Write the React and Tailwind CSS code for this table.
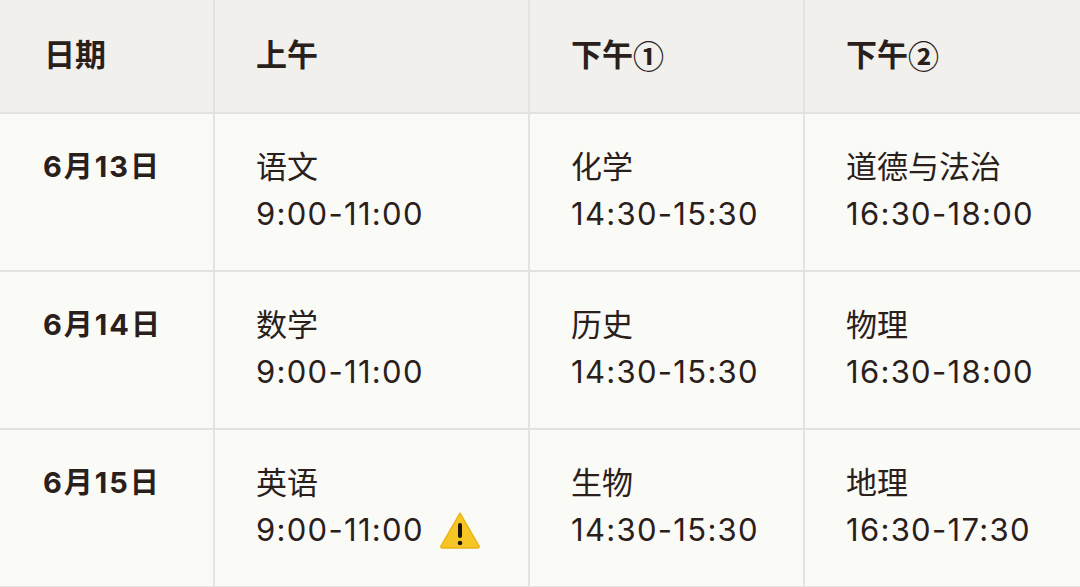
import React from 'react';

const rows = [
  { date: '6月13日', am: ['语文', '9:00-11:00'], pm1: ['化学', '14:30-15:30'], pm2: ['道德与法治', '16:30-18:00'] },
  { date: '6月14日', am: ['数学', '9:00-11:00'], pm1: ['历史', '14:30-15:30'], pm2: ['物理', '16:30-18:00'] },
  { date: '6月15日', am: ['英语', '9:00-11:00'], pm1: ['生物', '14:30-15:30'], pm2: ['地理', '16:30-17:30'], warn: true },
];

const cjk = { fontFamily: '"Noto Sans CJK SC", sans-serif' };

function Warning() {
  return (
    <svg width="44" height="40" viewBox="0 0 44 40" className="inline-block ml-[14px] -mt-[6px] align-middle">
      <path d="M22 3 L41 36 Q42 38 39 38 L5 38 Q2 38 3 36 Z" fill="#f6c624" stroke="#e9b416" strokeWidth="1.5" strokeLinejoin="round" />
      <rect x="20" y="13" width="4" height="15" rx="2" fill="#1b1410" />
      <circle cx="22" cy="33" r="2.3" fill="#1b1410" />
    </svg>
  );
}

function Cell({ lines, warn, last }) {
  return (
    <div className={`pl-[41px] pt-[29px] leading-[47px] text-[31px] border-b-2 border-[#e4e3df] ${last ? '' : 'border-r-2'}`}>
      <div>{lines[0]}</div>
      <div className="whitespace-nowrap">
        <span className="tracking-[1.3px]">{lines[1]}</span>
        {warn && <Warning />}
      </div>
    </div>
  );
}

const headers = [
  ['日期', ''],
  ['上午', ''],
  ['下午', '①'],
  ['下午', '②'],
];

export default function App() {
  return (
    <div
      className="w-[1080px] h-[587px] overflow-hidden bg-[#fafaf7] text-[#2a201b]"
      style={{ fontFamily: 'Inter, "Noto Sans CJK SC", "Noto Sans", sans-serif' }}
    >
      <div className="grid grid-cols-[215px_315px_275px_1fr]">
        {/* Header */}
        {headers.map(([h, n], i) => (
          <div
            key={i}
            className={`h-[114px] pb-[1px] bg-[#f1f0ec] flex items-center font-bold text-[31px] border-b-2 border-[#e4e3df] ${i === 0 ? 'pl-[44px]' : 'pl-[41px]'} ${i < 3 ? 'border-r-2' : ''}`}
          >
            {h}
            {n && <span style={cjk}>{n}</span>}
          </div>
        ))}

        {/* Rows */}
        {rows.map((r) => (
          <React.Fragment key={r.date}>
            <div className="h-[158px] pl-[43px] pt-[29px] leading-[47px] text-[29px] font-bold tracking-[2px] border-b-2 border-r-2 border-[#e4e3df]">
              {r.date}
            </div>
            <Cell lines={r.am} warn={r.warn} />
            <Cell lines={r.pm1} />
            <Cell lines={r.pm2} last />
          </React.Fragment>
        ))}
      </div>
    </div>
  );
}
